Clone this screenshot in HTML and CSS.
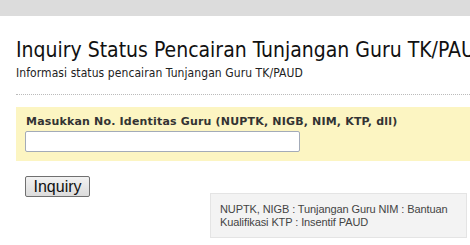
FILE: index.html
```html
<html>
<head>
<link rel="stylesheet" href="styles.css">
</head>
<body>
<div class="topbar"></div>
<div class="page">
<h1 class="title">Inquiry Status Pencairan Tunjangan Guru TK/PAUD</h1>
<div class="subtitle">Informasi status pencairan Tunjangan Guru TK/PAUD</div>
<div class="divider"></div>
<div class="formBox">
<label class="fieldLabel" for="nomor">Masukkan No. Identitas Guru (NUPTK, NIGB, NIM, KTP, dll)</label>
<input type="text" id="nomor" class="fieldInput">
</div>
<div class="actions">
<button class="btnInquiry">Inquiry</button>
<div class="note">NUPTK, NIGB : Tunjangan Guru NIM : Bantuan<br>Kualifikasi KTP : Insentif PAUD</div>
</div>
</div>
</body>
</html>
```

FILE: styles.css
```css
body {
    margin: 0;
    background-color: #ffffff;
    font-family: "DejaVu Sans Condensed", "DejaVu Sans", sans-serif;
    color: #222;
    overflow: hidden;
}

.topbar {
    height: 16px;
    background-color: #dcdcdc;
}

.page {
    padding-left: 16px;
}

.title {
    margin: 22px 0 0 0;
    font-size: 21px;
    line-height: 24px;
    font-weight: normal;
    color: #111;
    white-space: nowrap;
}

.subtitle {
    font-size: 12px;
    line-height: 14px;
    margin-top: 4px;
    letter-spacing: 0.08px;
    color: #222;
}

.divider {
    margin-top: 14px;
    border-top: 1px dotted #bbbbbb;
}

.formBox {
    margin-top: 12px;
    background-color: #fcf5c2;
    padding: 8px 10px 9px 10px;
    height: 37px;
}

.fieldLabel {
    display: block;
    font-family: "DejaVu Sans", sans-serif;
    font-weight: bold;
    font-size: 11px;
    line-height: 14px;
    letter-spacing: 0.18px;
    color: #333;
}

.fieldInput {
    display: block;
    margin: 2px 0 0 -1px;
    width: 275px;
    height: 21px;
    box-sizing: border-box;
    border: 1px solid #a3abb8;
    border-radius: 2px;
    background: #fff;
}

.actions {
    display: flex;
    align-items: flex-start;
    margin-top: 15px;
}

.btnInquiry {
    margin-left: 9px;
    width: 65px;
    height: 21px;
    padding: 0;
    font-family: "Liberation Sans", sans-serif;
    font-size: 16px;
    line-height: 19px;
    color: #111;
    background: linear-gradient(#f2f2f2, #dcdcdc);
    border: 1px solid #707070;
    border-radius: 2px;
}

.note {
    margin-left: 120px;
    margin-top: 17px;
    width: 237px;
    height: 22px;
    padding: 9px 9px 12px 9px;
    background-color: #f3f3f3;
    border: 1px solid #e4e4e4;
    font-family: "Liberation Sans", sans-serif;
    font-size: 11px;
    line-height: 13px;
    letter-spacing: -0.1px;
    color: #444;
    white-space: nowrap;
}
```
